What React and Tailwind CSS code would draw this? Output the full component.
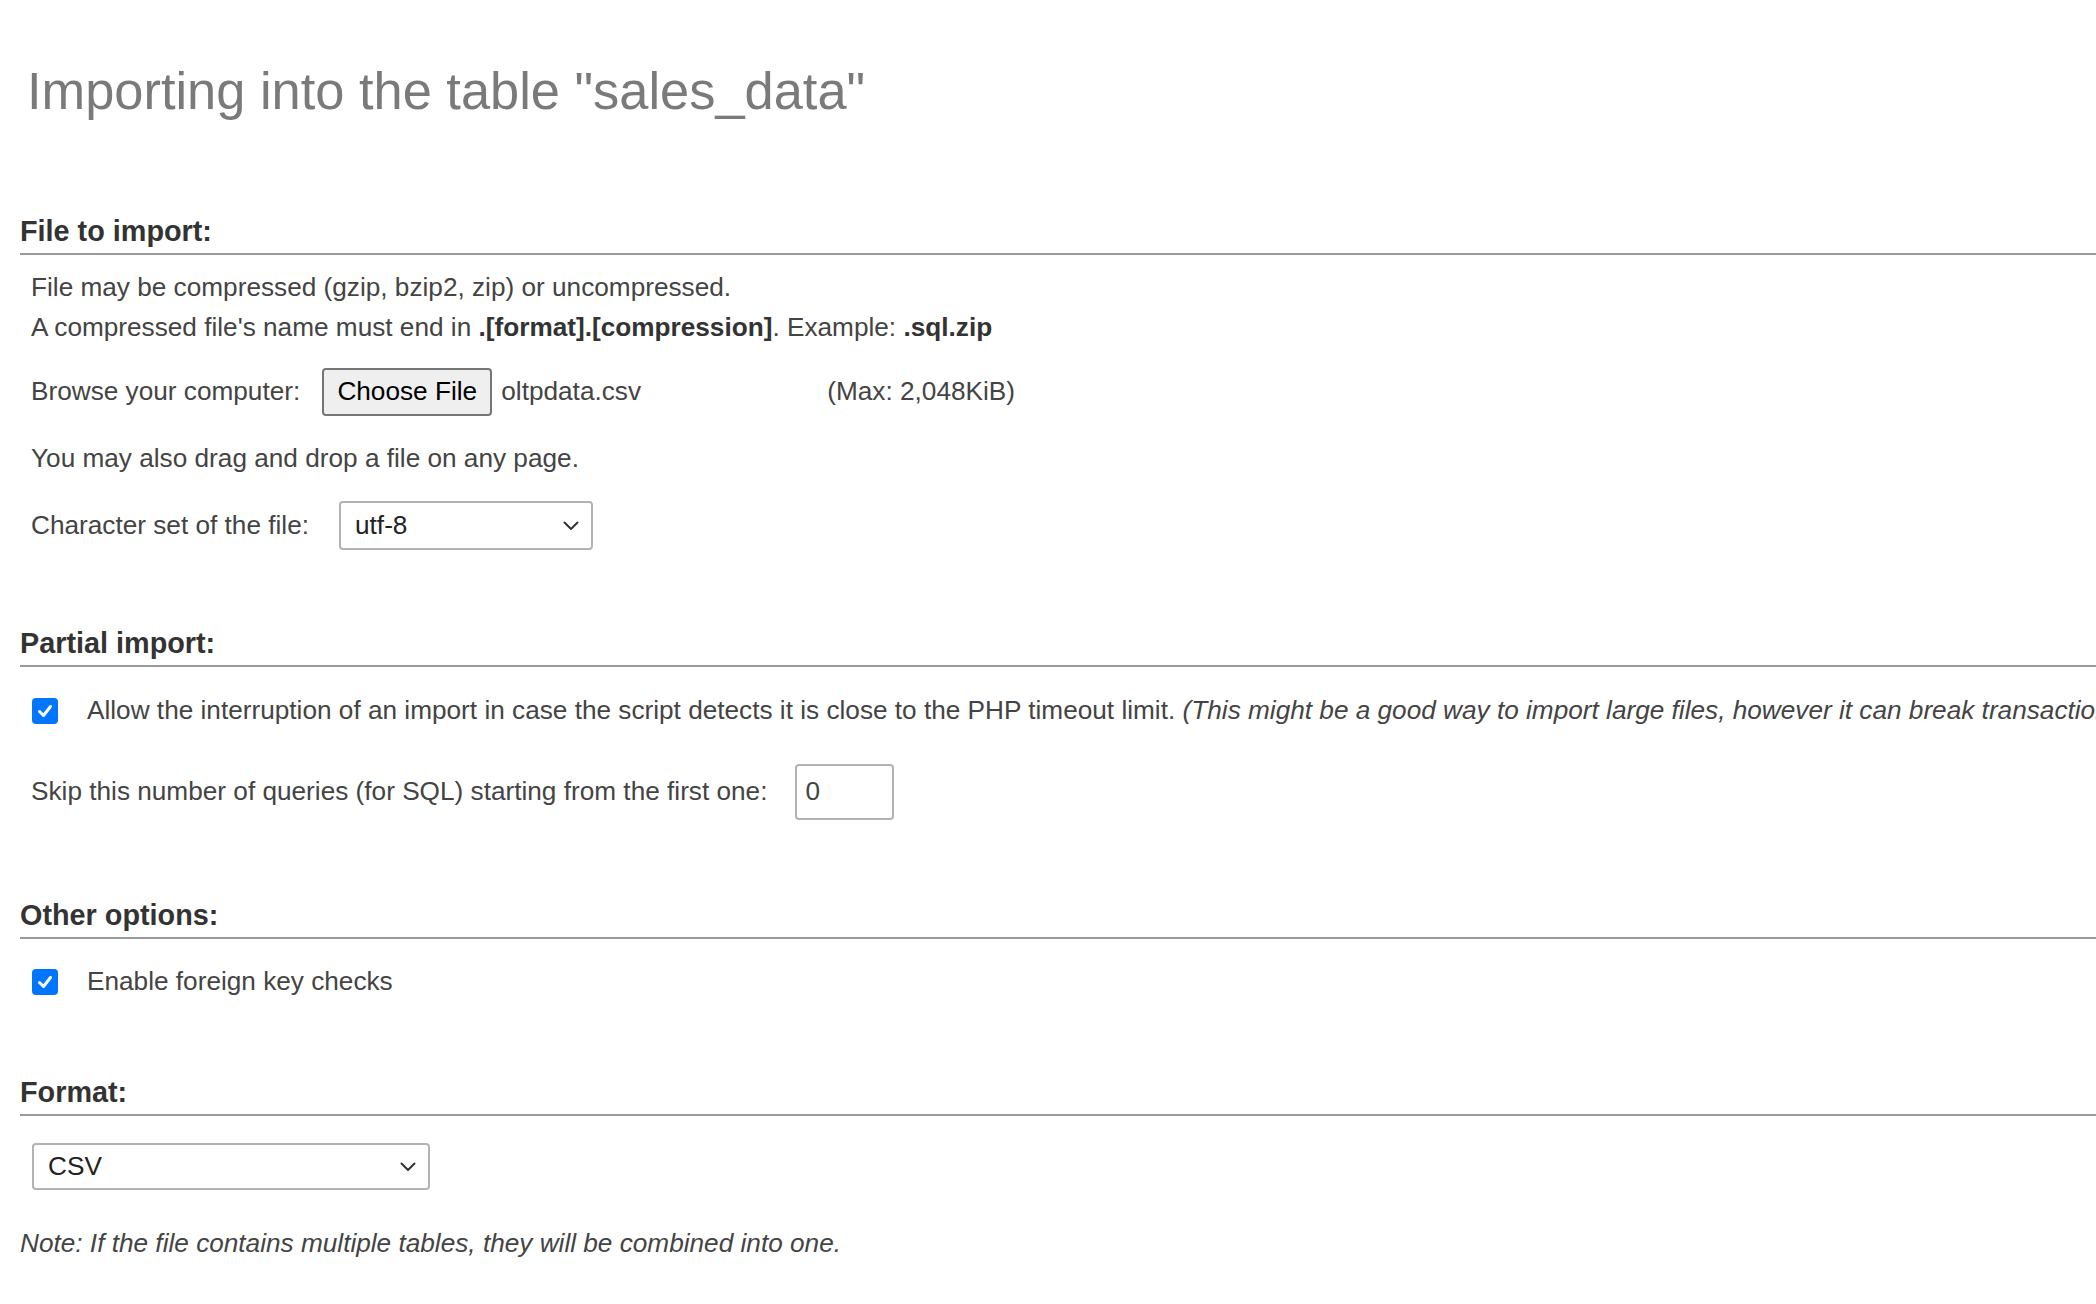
import React from "react";

function Chevron() {
  return (
    <svg width="16" height="10" viewBox="0 0 16 10" fill="none" className="shrink-0">
      <path d="M1.5 1.5 L8 8 L14.5 1.5" stroke="#333" strokeWidth="2" strokeLinecap="round" strokeLinejoin="round" />
    </svg>
  );
}

function Check() {
  return (
    <div className="w-[26px] h-[26px] rounded-[4px] bg-[#0075ff] flex items-center justify-center shrink-0">
      <svg width="18" height="18" viewBox="0 0 18 18" fill="none">
        <path d="M3.5 9.5 L7.5 13.5 L14.5 4.5" stroke="#fff" strokeWidth="3" strokeLinecap="round" strokeLinejoin="round" />
      </svg>
    </div>
  );
}

function Legend({ children, mt }) {
  return (
    <div className={`${mt} ml-[20px] h-[44px] border-b-2 border-[#999] font-bold text-[28.8px] text-[#333] whitespace-nowrap`}>
      <div className="h-[40px] leading-[40px]">{children}</div>
    </div>
  );
}

export default function App() {
  return (
    <div
      className="w-[2096px] h-[1304px] overflow-hidden bg-white text-[#444] text-[26.2px]"
      style={{ fontFamily: '"Liberation Sans", Arial, sans-serif' }}
    >
      <div className="pt-[61px] pl-[27px] h-[121px] leading-[60px] text-[52.4px] text-[#7a7a7a] whitespace-nowrap">
        Importing into the table "sales_data"
      </div>

      <Legend mt="mt-[90px]">File to import:</Legend>

      <div className="pl-[31px] whitespace-nowrap">
        <div className="mt-[12px] h-[40px] leading-[40px]">File may be compressed (gzip, bzip2, zip) or uncompressed.</div>
        <div className="h-[40px] leading-[40px]">
          A compressed file's name must end in <b className="text-[#333]">.[format].[compression]</b>. Example: <b className="text-[#333]">.sql.zip</b>
        </div>

        <div className="mt-[21px] h-[48px] flex items-center">
          <span>Browse your computer:</span>
          <div className="ml-[22px] h-[48px] w-[170px] rounded-[4px] border-2 border-[#767676] bg-[#efefef] text-black flex items-center justify-center">
            Choose File
          </div>
          <span className="ml-[9px] w-[326px]">oltpdata.csv</span>
          <span>(Max: 2,048KiB)</span>
        </div>

        <div className="mt-[22px] h-[40px] leading-[40px]">You may also drag and drop a file on any page.</div>

        <div className="mt-[23px] h-[49px] flex items-center">
          <span>Character set of the file:</span>
          <div className="ml-[30px] w-[254px] h-[49px] rounded-[4px] border-2 border-[#b3b3b3] bg-white flex items-center justify-between pl-[14px] pr-[12px] text-[#222]">
            <span>utf-8</span>
            <Chevron />
          </div>
        </div>
      </div>

      <Legend mt="mt-[73px]">Partial import:</Legend>

      <div className="whitespace-nowrap">
        <div className="mt-[24px] h-[40px] flex items-center pl-[32px]">
          <Check />
          <span className="ml-[29px]">
            Allow the interruption of an import in case the script detects it is close to the PHP timeout limit.{" "}
            <i>(This might be a good way to import large files, however it can break transactions.)</i>
          </span>
        </div>

        <div className="mt-[33px] h-[56px] flex items-center pl-[31px]">
          <span>Skip this number of queries (for SQL) starting from the first one:</span>
          <div className="ml-[28px] w-[99px] h-[56px] rounded-[4px] border-2 border-[#b3b3b3] bg-white flex items-center pl-[8px] text-[#444]">
            0
          </div>
        </div>
      </div>

      <Legend mt="mt-[75px]">Other options:</Legend>

      <div className="mt-[23px] h-[40px] flex items-center pl-[32px] whitespace-nowrap">
        <Check />
        <span className="ml-[29px]">Enable foreign key checks</span>
      </div>

      <Legend mt="mt-[70px]">Format:</Legend>

      <div className="mt-[27px] ml-[32px] w-[398px] h-[47px] rounded-[4px] border-2 border-[#b3b3b3] bg-white flex items-center justify-between pl-[14px] pr-[12px] text-[#222]">
        <span>CSV</span>
        <Chevron />
      </div>

      <div className="mt-[33px] ml-[20px] h-[40px] leading-[40px] italic whitespace-nowrap">
        Note: If the file contains multiple tables, they will be combined into one.
      </div>
    </div>
  );
}
